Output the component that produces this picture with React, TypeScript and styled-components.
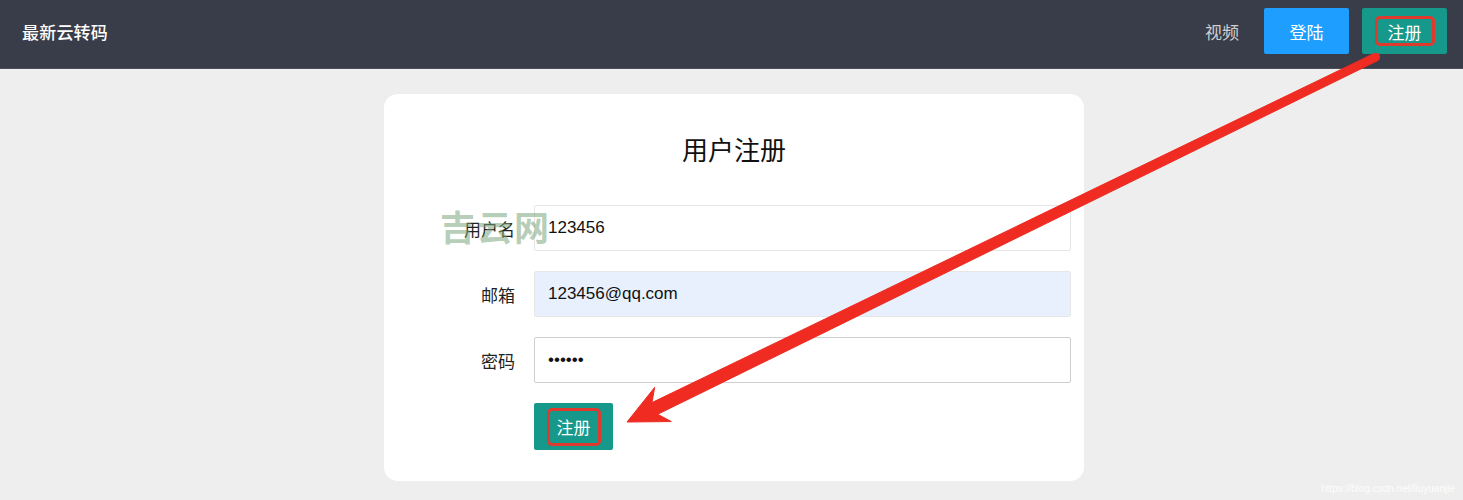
import React from "react";
import styled, { createGlobalStyle } from "styled-components";

const Global = createGlobalStyle`
  html, body { margin: 0; padding: 0; }
  body {
    background: #eeeeee;
    font-family: "Noto Sans CJK SC", "Liberation Sans", sans-serif;
    color: #333;
  }
`;

const Page = styled.div`
  position: relative;
  width: 1463px;
  height: 500px;
  overflow: hidden;
  background: #eeeeee;
`;

const Header = styled.header`
  height: 69px;
  background: #393d49;
  border-bottom: 1px solid #4b4f5a;
  box-sizing: border-box;
  display: flex;
  align-items: center;
  justify-content: space-between;
  padding: 0 16px 6px 22px;
`;

const Logo = styled.div`
  color: #fff;
  font-size: 17px;
  font-weight: 500;
  letter-spacing: 0.2px;
`;

const Nav = styled.nav`
  display: flex;
  align-items: center;
  gap: 13px;
`;

const NavLink = styled.span`
  color: #d0d0d0;
  font-size: 17px;
  margin-right: 12px;
`;

const Btn = styled.button<{ $tone: "blue" | "green"; $w: number }>`
  position: relative;
  width: ${(p) => p.$w}px;
  height: 46px;
  border: none;
  border-radius: 2px;
  color: #fff;
  font-family: inherit;
  font-size: 17px;
  background: ${(p) => (p.$tone === "blue" ? "#1e9fff" : "#16988a")};
  display: flex;
  align-items: center;
  justify-content: center;
  padding: 0;
`;

const Mark = styled.span<{ $w: number; $h: number }>`
  position: absolute;
  left: 50%;
  top: 50%;
  width: ${(p) => p.$w}px;
  height: ${(p) => p.$h}px;
  transform: translate(-50%, -50%);
  border: 3px solid #e0392e;
  border-radius: 5px;
  box-sizing: border-box;
`;

const Main = styled.main`
  display: flex;
  justify-content: center;
  padding-top: 25px;
`;

const Card = styled.section`
  width: 700px;
  background: #fff;
  border-radius: 14px;
  box-sizing: border-box;
  padding: 36px 13px 31px 0;
  margin-left: 5px;
`;

const Title = styled.h2`
  margin: 0 0 37px;
  padding-left: 13px;
  text-align: center;
  font-size: 26px;
  font-weight: 400;
  color: #111;
  line-height: 38px;
`;

const Form = styled.form`
  display: flex;
  flex-direction: column;
  gap: 20px;
`;

const Row = styled.div`
  display: grid;
  grid-template-columns: 150px 1fr;
  align-items: center;
`;

const Label = styled.label`
  text-align: right;
  padding-right: 19px;
  font-size: 17px;
  color: #222;
`;

const Input = styled.input<{ $fill?: boolean; $strong?: boolean }>`
  height: 46px;
  box-sizing: border-box;
  width: 100%;
  border: 1px solid ${(p) => (p.$strong ? "#cfcfcf" : "#e6e6e6")};
  border-radius: 2px;
  background: ${(p) => (p.$fill ? "#e8f0fe" : "#fff")};
  padding: 0 13px;
  font-family: "Liberation Sans", "Noto Sans CJK SC", sans-serif;
  font-size: 17px;
  color: #111;
  outline: none;
`;

const Watermark = styled.div`
  position: absolute;
  left: 440px;
  top: 200px;
  font-size: 35px;
  font-weight: 700;
  color: rgba(120, 165, 125, 0.55);
  letter-spacing: 2px;
  pointer-events: none;
`;

const Credit = styled.div`
  position: absolute;
  right: 8px;
  bottom: 6px;
  font-family: "Liberation Sans", sans-serif;
  font-size: 10px;
  color: rgba(255, 255, 255, 0.9);
  pointer-events: none;
`;

const ArrowSvg = styled.svg`
  position: absolute;
  left: 0;
  top: 0;
  pointer-events: none;
`;

function Arrow() {
  const tip = [627, 422];
  const end = [1376, 57];
  const dx = end[0] - tip[0];
  const dy = end[1] - tip[1];
  const L = Math.hypot(dx, dy);
  const ux = dx / L, uy = dy / L;
  const nx = -uy, ny = ux;
  const at = (s: number, w: number) => `${tip[0] + ux * s + nx * w},${tip[1] + uy * s + ny * w}`;
  const pts = [
    at(0, 0),
    at(40, -19),
    at(31, -6.5),
    at(L, -4),
    at(L, 4),
    at(31, 6.5),
    at(40, 19),
  ].join(" ");
  return (
    <ArrowSvg width="1463" height="500" viewBox="0 0 1463 500">
      <polygon points={pts} fill="#ef2b22" strokeLinejoin="round" stroke="#ef2b22" strokeWidth="1" />
      <circle cx={end[0]} cy={end[1]} r="4" fill="#ef2b22" />
    </ArrowSvg>
  );
}

export default function App() {
  return (
    <Page>
      <Global />
      <Header>
        <Logo>最新云转码</Logo>
        <Nav>
          <NavLink>视频</NavLink>
          <Btn $tone="blue" $w={85} type="button">登陆</Btn>
          <Btn $tone="green" $w={85} type="button">
            注册
            <Mark $w={60} $h={30} />
          </Btn>
        </Nav>
      </Header>
      <Main>
        <Card>
          <Title>用户注册</Title>
          <Form onSubmit={(e) => e.preventDefault()}>
            <Row>
              <Label>用户名</Label>
              <Input defaultValue="123456" />
            </Row>
            <Row>
              <Label>邮箱</Label>
              <Input $fill defaultValue="123456@qq.com" />
            </Row>
            <Row>
              <Label>密码</Label>
              <Input $strong type="password" defaultValue="123456" />
            </Row>
            <Row>
              <span />
              <Btn $tone="green" $w={79} type="submit" style={{ height: 47 }}>
                注册
                <Mark $w={54} $h={38} />
              </Btn>
            </Row>
          </Form>
        </Card>
      </Main>
      <Watermark>吉云网</Watermark>
      <Arrow />
      <Credit>https://blog.csdn.net/liuyuanjie</Credit>
    </Page>
  );
}
